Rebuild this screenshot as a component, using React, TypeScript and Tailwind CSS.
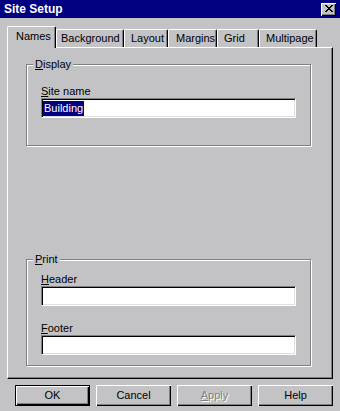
import React from 'react';

const font = { fontFamily: '"Liberation Sans", Arial, sans-serif' };

const tabs = [
  { label: 'Names', w: 'w-[49px]', pl: 'pl-[8px]', active: true },
  { label: 'Background', w: 'w-[68px]', pl: 'pl-[4px]' },
  { label: 'Layout', w: 'w-[44px]', pl: 'pl-[6px]' },
  { label: 'Margins', w: 'w-[49px]', pl: 'pl-[7px]' },
  { label: 'Grid', w: 'w-[42px]', pl: 'pl-[6px]' },
  { label: 'Multipage', w: 'w-[58px]', pl: 'pl-[6px]' },
];

function Tab({ label, w, pl, active }: { label: string; w: string; pl: string; active?: boolean }) {
  return (
    <div
      className={
        'flex items-center border-t border-l border-r border-t-white border-l-white border-r-black rounded-t-[2px] shadow-[inset_-1px_0_#808080] bg-[#c3c3c6] ' +
        w +
        ' ' +
        pl +
        (active ? ' h-[22px] -mb-px relative z-10 pb-[3px]' : ' h-[18px]')
      }
    >
      <span className="leading-[13px]">{label}</span>
    </div>
  );
}

function Field({ children }: { children?: React.ReactNode }) {
  return (
    <div className="w-[255px] h-[20px] bg-white border border-t-[#808080] border-l-[#808080] border-b-white border-r-white shadow-[inset_1px_1px_#000,inset_-1px_-1px_#dfdfdf] pl-px pt-px">
      {children}
    </div>
  );
}

function Group({ title, className, children }: { title: React.ReactNode; className: string; children: React.ReactNode }) {
  return (
    <div className={'relative w-[285px] border border-[#808080] shadow-[inset_1px_1px_#fff,1px_1px_#fff] pl-[14px] ' + className}>
      <span className="absolute -top-[8px] left-[6px] px-[2px] leading-[14px] bg-[#c3c3c6]">{title}</span>
      {children}
    </div>
  );
}

function Button({ children, isDefault }: { children: React.ReactNode; isDefault?: boolean }) {
  return (
    <div
      className={
        'w-[75px] h-[21px] flex items-center justify-center ' +
        (isDefault
          ? 'border border-black shadow-[inset_1px_1px_#fff,inset_-1px_-1px_#000,inset_-2px_-2px_#808080]'
          : 'shadow-[inset_1px_1px_#fff,inset_-1px_-1px_#000,inset_-2px_-2px_#808080]')
      }
    >
      {children}
    </div>
  );
}

export default function App() {
  return (
    <div className="w-[340px] h-[411px] bg-[#c3c3c6] text-[11px] text-black flex flex-col overflow-hidden" style={font}>
      {/* Title bar */}
      <div className="h-[18px] bg-[#000080] flex items-center justify-between pl-[4px] pr-[4px]">
        <span className="text-white font-bold text-[12px] leading-[14px]">Site Setup</span>
        <div className="w-[15px] h-[13px] bg-[#c3c3c6] shadow-[inset_1px_1px_#fff,inset_-1px_-1px_#000,inset_-2px_-2px_#808080] flex items-center justify-center pb-px">
          <svg width="8" height="7" viewBox="0 0 8 7" shapeRendering="crispEdges">
            <path d="M0 0h2v1H0zM6 0h2v1H6zM1 1h2v1H1zM5 1h2v1H5zM2 2h4v1H2zM3 3h2v1H3zM2 4h4v1H2zM1 5h2v1H1zM5 5h2v1H5zM0 6h2v1H0zM6 6h2v1H6z" fill="#000" />
          </svg>
        </div>
      </div>

      <div className="px-[7px] pt-[8px] flex flex-col">
        {/* Tabs */}
        <div className="flex items-end h-[21px]">
          {tabs.map((t) => (
            <Tab key={t.label} {...t} />
          ))}
        </div>

        {/* Panel */}
        <div className="w-[326px] h-[332px] border border-t-white border-l-white border-r-black border-b-black shadow-[inset_-1px_-1px_#808080] pl-[18px] pt-[16px] flex flex-col">
          <Group
            className="h-[82px] pt-[19px]"
            title={
              <>
                <u>D</u>isplay
              </>
            }
          >
            <div className="leading-[14px]">
              <u>S</u>ite name
            </div>
            <Field>
              <span className="inline-block bg-[#000080] text-white leading-[15px] px-px">Building</span>
            </Field>
          </Group>

          <Group
            className="h-[107px] mt-[113px] pt-[12px]"
            title={
              <>
                <u>P</u>rint
              </>
            }
          >
            <div className="leading-[14px]">
              <u>H</u>eader
            </div>
            <Field />
            <div className="leading-[14px] mt-[15px]">
              <u>F</u>ooter
            </div>
            <Field />
          </Group>
        </div>

        {/* Buttons */}
        <div className="flex gap-[6px] pl-[8px] mt-[6px]">
          <Button isDefault>OK</Button>
          <Button>Cancel</Button>
          <Button>
            <span className="text-[#808080] [text-shadow:1px_1px_#fff]">
              <u>A</u>pply
            </span>
          </Button>
          <Button>Help</Button>
        </div>
      </div>
    </div>
  );
}
